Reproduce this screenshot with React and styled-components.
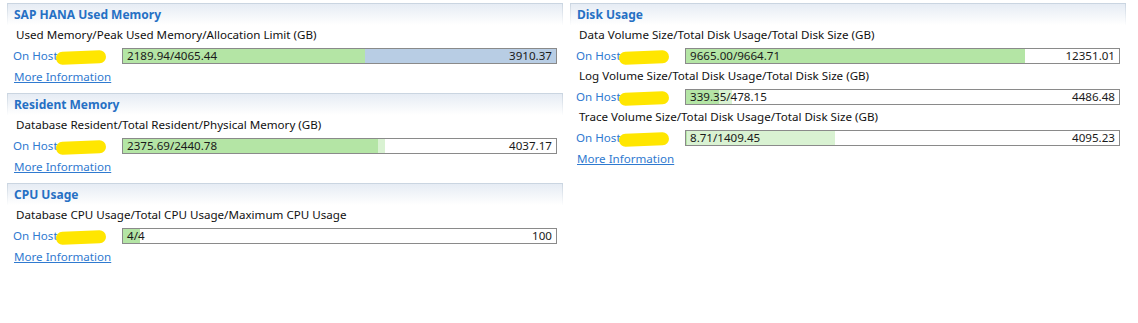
import styled, { createGlobalStyle } from "styled-components";

const GlobalStyle = createGlobalStyle`
    body {
        margin: 0;
        background: #ffffff;
        font-family: "Noto Sans", "Noto Sans CJK KR", sans-serif;
        font-size: 11.6px;
        color: #111111;
    }
`

const memorySections = [
    {
        title: "SAP HANA Used Memory",
        rows: [
            { label: "Used Memory/Peak Used Memory/Allocation Limit (GB)", text: "2189.94/4065.44", max: "3910.37", value: 2189.94, second: 4065.44, total: 3910.37, secondColor: "#b8cde4" },
        ],
    },
    {
        title: "Resident Memory",
        rows: [
            { label: "Database Resident/Total Resident/Physical Memory (GB)", text: "2375.69/2440.78", max: "4037.17", value: 2375.69, second: 2440.78, total: 4037.17 },
        ],
    },
    {
        title: "CPU Usage",
        rows: [
            { label: "Database CPU Usage/Total CPU Usage/Maximum CPU Usage", text: "4/4", max: "100", value: 4, second: 4, total: 100 },
        ],
    },
];

const diskSections = [
    {
        title: "Disk Usage",
        rows: [
            { label: "Data Volume Size/Total Disk Usage/Total Disk Size (GB)", text: "9665.00/9664.71", max: "12351.01", value: 9665.0, second: 9664.71, total: 12351.01 },
            { label: "Log Volume Size/Total Disk Usage/Total Disk Size (GB)", text: "339.35/478.15", max: "4486.48", value: 339.35, second: 478.15, total: 4486.48 },
            { label: "Trace Volume Size/Total Disk Usage/Total Disk Size (GB)", text: "8.71/1409.45", max: "4095.23", value: 8.71, second: 1409.45, total: 4095.23 },
        ],
    },
];

function UsageBar({ row }) {
    const pct = (v) => Math.min(100, (v / row.total) * 100) + "%";
    return (
        <Bar>
            <Fill color={row.secondColor || "#d9f2d2"} style={{ width: pct(row.second) }} />
            <Fill color="#b4e5a5" style={{ width: pct(row.value) }} />
            <BarText>{row.text}</BarText>
            <BarText>{row.max}</BarText>
        </Bar>
    );
}

function Section({ section }) {
    return (
        <Box>
            <Header>{section.title}</Header>
            <Body>
                {section.rows.map((row) => (
                    <div key={row.label}>
                        <Label>{row.label}</Label>
                        <HostRow>
                            <Host>
                                On Host<Redact />
                            </Host>
                            <UsageBar row={row} />
                        </HostRow>
                    </div>
                ))}
                <More>More Information</More>
            </Body>
        </Box>
    );
}

export default function App() {
    return (
        <>
            <GlobalStyle />
            <Page>
                <Column>
                    {memorySections.map((s) => <Section key={s.title} section={s} />)}
                </Column>
                <Column>
                    {diskSections.map((s) => <Section key={s.title} section={s} />)}
                </Column>
            </Page>
        </>
    );
}

const Page = styled.div`
    display: flex;
    gap: 7px;
    padding: 3px 12px 0 7px;
    width: 1138px;
    box-sizing: border-box;
`
const Column = styled.div`
    display: flex;
    flex-direction: column;
    width: 556px;
`
const Box = styled.div`
    display: flex;
    flex-direction: column;
    padding-bottom: 5px;
`
const Header = styled.div`
    height: 22px;
    box-sizing: border-box;
    padding: 1px 0 0 6px;
    line-height: 19px;
    font-size: 12px;
    font-weight: bold;
    color: #2670c4;
    border-style: solid;
    border-width: 1px 1px 0 1px;
    border-image: linear-gradient(#c9d4e0, #ffffff) 1;
    background: linear-gradient(#e6ecf4, #ffffff);
`
const Body = styled.div`
    display: flex;
    flex-direction: column;
`
const Label = styled.div`
    height: 20px;
    line-height: 20px;
    padding-left: 9px;
    color: #111111;
`
const HostRow = styled.div`
    display: flex;
    align-items: center;
    height: 21px;
    padding-left: 6px;
`
const Host = styled.div`
    display: flex;
    align-items: center;
    width: 109px;
    color: #2f7ad0;
`
const Redact = styled.span`
    display: inline-block;
    width: 50px;
    height: 13px;
    margin-left: -2px;
    margin-top: 3px;
    border-radius: 8px;
    background: #ffe600;
    transform: rotate(-2deg);
`
const Bar = styled.div`
    position: relative;
    display: flex;
    justify-content: space-between;
    align-items: center;
    width: 435px;
    height: 16px;
    box-sizing: border-box;
    border: 1px solid #8a8a8a;
    background: #ffffff;
    padding: 0 4px;
`
const Fill = styled.div`
    position: absolute;
    left: 0;
    top: 0;
    bottom: 0;
    background: ${(props) => props.color};
`
const BarText = styled.span`
    position: relative;
    line-height: 14px;
    color: #1a1a1a;
`
const More = styled.a`
    height: 22px;
    line-height: 22px;
    padding-left: 7px;
    color: #2f7ad0;
    text-decoration: underline;
    cursor: pointer;
    align-self: flex-start;
`
